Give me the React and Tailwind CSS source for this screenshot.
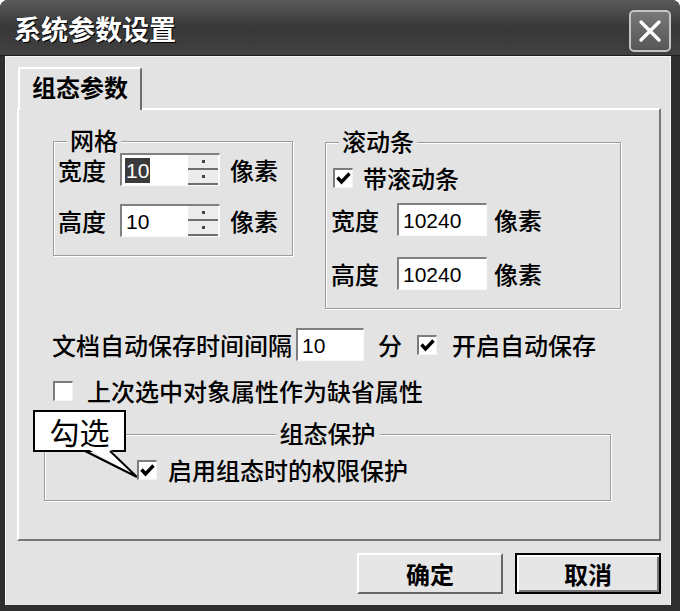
import React from 'react';

const cjk = "font-['Noto_Sans_CJK_SC',sans-serif]";
const num = "font-['Liberation_Sans','Noto_Sans_CJK_SC',sans-serif]";

const Check = ({ checked }) => (
  <div className="w-[20px] h-[20px] shrink-0 bg-white border-t-2 border-l-2 border-[#7c7c7c] border-b border-r border-b-[#f4f4f4] border-r-[#f4f4f4] flex items-center justify-center">
    {checked && (
      <svg width="15" height="13" viewBox="0 0 15 13">
        <path d="M1.5 5.5 L5.5 10 L13.5 1.5" fill="none" stroke="#000" strokeWidth="3.4" />
      </svg>
    )}
  </div>
);

const SpinHalf = () => (
  <div className="flex-1 bg-[#ececec] border-b-2 border-[#6e6e6e] flex items-center justify-center">
    <div className="w-[3px] h-[3px] bg-[#444]" />
  </div>
);

const Field = ({ value, className, selected, spin }) => (
  <div className={`h-[33px] bg-white border-t-2 border-l-2 border-[#808080] border-b border-r border-b-[#fafafa] border-r-[#fafafa] flex items-center ${className}`}>
    <span className={`ml-[3px] px-[1px] text-[21px] leading-[25px] ${num} ${selected ? 'bg-[#3b3b3b] text-white' : 'text-black'}`}>
      {value}
    </span>
    {spin && (
      <div className="ml-auto mr-[1px] self-stretch w-[30px] flex flex-col">
        <SpinHalf />
        <SpinHalf />
      </div>
    )}
  </div>
);

const Group = ({ title, className, legendClass, children }) => (
  <div className={`border border-[#9c9c9c] shadow-[inset_1px_1px_0_#fff,1px_1px_0_#fff] ${className}`}>
    <div className={`w-fit -mt-[14px] px-[3px] bg-[#e3e3e3] text-[24px] leading-[24px] font-medium ${legendClass}`}>{title}</div>
    {children}
  </div>
);

const Label = ({ children, className = '' }) => (
  <span className={`text-[24px] leading-[26px] font-medium whitespace-nowrap ${className}`}>{children}</span>
);

export default function App() {
  return (
    <div className={`relative w-[680px] h-[611px] bg-white text-black ${cjk}`}>
      <div className="w-full h-full bg-[#2f2f2f] rounded-t-[8px] overflow-hidden flex flex-col">
        {/* Title bar */}
        <div className="h-[56px] shrink-0 flex items-start justify-between bg-gradient-to-b from-[#5a5a5a] via-[#383838] to-[#414141] border-b border-[#1e1e1e]">
          <span className="ml-[14px] mt-[13px] text-[27px] leading-[32px] font-bold text-white [text-shadow:1px_1px_0_#000,-1px_0_0_#222]">
            系统参数设置
          </span>
          <div className="mt-[10px] mr-[9px] w-[42px] h-[42px] rounded-[5px] border-2 border-[#c4c4c4] bg-gradient-to-b from-[#787878] to-[#575757] flex items-center justify-center">
            <svg width="24" height="24" viewBox="0 0 24 24">
              <path d="M3 3 L21 21 M21 3 L3 21" stroke="#fff" strokeWidth="3.4" strokeLinecap="round" />
            </svg>
          </div>
        </div>

        {/* Body */}
        <div className="flex-1 ml-[5px] mr-[9px] mb-[6px] bg-[#e3e3e3] border-l border-t border-r border-[#f6f6f6] pt-[10px] pl-[11px]">
          {/* Tab */}
          <div className="relative z-10 ml-[1px] -mb-[2px] w-[124px] h-[43px] bg-[#e3e3e3] border-t-2 border-l-2 border-white border-r-2 border-r-[#6c6c6c] rounded-t-[2px] flex items-center justify-center pb-[6px]">
            <span className="text-[24px] leading-[26px] font-bold">组态参数</span>
          </div>

          {/* Panel */}
          <div className="w-[644px] h-[433px] border-t-2 border-l-2 border-white border-b-2 border-r-2 border-b-[#777] border-r-[#777]">
            {/* Upper groups */}
            <div className="flex items-start pt-[31px] pl-[34px] gap-[32px]">
              <Group title="网格" className="w-[240px] h-[115px]" legendClass="ml-[13px]">
                <div className="mt-[1px] pl-[4px] flex flex-col gap-[18px]">
                  <div className="h-[33px] flex items-center">
                    <Label>宽度</Label>
                    <Field value="10" selected spin className="ml-[14px] w-[100px]" />
                    <Label className="ml-[10px]">像素</Label>
                  </div>
                  <div className="h-[33px] flex items-center">
                    <Label>高度</Label>
                    <Field value="10" spin className="ml-[14px] w-[100px]" />
                    <Label className="ml-[10px]">像素</Label>
                  </div>
                </div>
              </Group>

              <Group title="滚动条" className="mt-[1px] w-[296px] h-[167px]" legendClass="ml-[13px]">
                <div className="pl-[5px] flex flex-col">
                  <div className="mt-[8px] h-[33px] flex items-center">
                    <div className="ml-[2px]"><Check checked /></div>
                    <Label className="ml-[10px]">带滚动条</Label>
                  </div>
                  <div className="mt-[9px] h-[33px] flex items-center">
                    <Label>宽度</Label>
                    <Field value="10240" className="ml-[18px] w-[90px]" />
                    <Label className="ml-[7px]">像素</Label>
                  </div>
                  <div className="mt-[21px] h-[33px] flex items-center">
                    <Label>高度</Label>
                    <Field value="10240" className="ml-[18px] w-[90px]" />
                    <Label className="ml-[7px]">像素</Label>
                  </div>
                </div>
              </Group>
            </div>

            {/* Autosave row */}
            <div className="mt-[19px] pl-[33px] h-[33px] flex items-center">
              <Label>文档自动保存时间间隔</Label>
              <Field value="10" className="ml-[4px] w-[68px]" />
              <Label className="ml-[14px]">分</Label>
              <div className="ml-[15px]"><Check checked /></div>
              <Label className="ml-[15px]">开启自动保存</Label>
            </div>

            {/* Default props row */}
            <div className="mt-[16px] pl-[34px] h-[28px] flex items-center">
              <Check />
              <Label className="ml-[14px]">上次选中对象属性作为缺省属性</Label>
            </div>

            {/* Protect group */}
            <Group title="组态保护" className="mt-[29px] ml-[25px] w-[567px] h-[67px]" legendClass="mx-auto px-[4px]">
              <div className="mt-[11px] pl-[92px] h-[28px] flex items-center">
                <Check checked />
                <Label className="ml-[11px]">启用组态时的权限保护</Label>
              </div>
            </Group>
          </div>

          {/* Buttons */}
          <div className="w-[644px] mt-[12px] flex justify-end gap-[12px]">
            <button className="w-[146px] h-[41px] bg-[#e6e6e6] border-t-2 border-l-2 border-white border-b-2 border-r-2 border-b-[#666] border-r-[#666] text-[24px] leading-[26px] font-bold flex items-center justify-center">
              确定
            </button>
            <button className="w-[146px] h-[41px] bg-[#e6e6e6] border-2 border-black shadow-[inset_2px_2px_0_#fff,inset_-2px_-2px_0_#777] text-[24px] leading-[26px] font-bold flex items-center justify-center">
              取消
            </button>
          </div>
        </div>
      </div>

      {/* Callout annotation */}
      <div className="absolute left-[33px] top-[410px] w-[93px] h-[42px] bg-white border-2 border-black flex items-center justify-center">
        <span className="text-[30px] leading-[32px]">勾选</span>
      </div>
      <svg className="absolute left-[78px] top-[448px]" width="64" height="34" viewBox="0 0 64 34">
        <polygon points="8,0 31,0 59,29" fill="#fff" />
        <path d="M7 3 L59 29 M32 3 L59 29" stroke="#000" strokeWidth="2" fill="none" />
      </svg>
    </div>
  );
}
